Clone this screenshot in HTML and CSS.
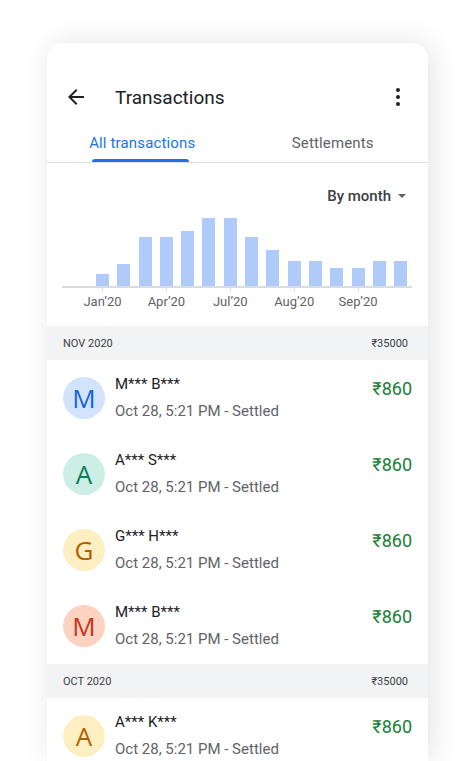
FILE: index.html
```html
<!DOCTYPE html>
<html lang="en">
<head>
<meta charset="utf-8"/>
<meta content="width=device-width, initial-scale=1.0" name="viewport"/>
<title>Transactions</title>
<link rel="stylesheet" href="styles.css">
</head>
<body>
<div class="phone">

  <div class="toolbar">
    <svg class="back" viewBox="0 0 24 24" width="24" height="24"><path d="M20 11H7.83l5.59-5.59L12 4l-8 8 8 8 1.41-1.41L7.83 13H20v-2z" fill="#202124"/></svg>
    <div class="title">Transactions</div>
    <div class="kebab"><span></span><span></span><span></span></div>
  </div>

  <div class="tabs">
    <div class="tab active"><div class="tab-inner"><span class="tab-label">All transactions</span><span class="indicator"></span></div></div>
    <div class="tab"><div class="tab-inner"><span class="tab-label">Settlements</span></div></div>
  </div>

  <div class="filter">
    <span>By month</span>
    <span class="caret"></span>
  </div>

  <div class="chart">
    <div class="bars">
      <div class="bar" style="height:12px"></div>
      <div class="bar" style="height:22px"></div>
      <div class="bar" style="height:49px"></div>
      <div class="bar" style="height:49px"></div>
      <div class="bar" style="height:55px"></div>
      <div class="bar" style="height:68px"></div>
      <div class="bar" style="height:68px"></div>
      <div class="bar" style="height:49px"></div>
      <div class="bar" style="height:36px"></div>
      <div class="bar" style="height:25px"></div>
      <div class="bar" style="height:25px"></div>
      <div class="bar" style="height:18px"></div>
      <div class="bar" style="height:18px"></div>
      <div class="bar" style="height:25px"></div>
      <div class="bar" style="height:25px"></div>
    </div>
    <div class="ticks">
      <div class="tick"></div><div></div><div></div>
      <div class="tick"></div><div></div><div></div>
      <div class="tick"></div><div></div><div></div>
      <div class="tick"></div><div></div><div></div>
      <div class="tick"></div><div></div><div></div>
    </div>
    <div class="labels">
      <div class="lbl"><span>Jan’20</span></div><div></div><div></div>
      <div class="lbl"><span>Apr’20</span></div><div></div><div></div>
      <div class="lbl"><span>Jul’20</span></div><div></div><div></div>
      <div class="lbl"><span>Aug’20</span></div><div></div><div></div>
      <div class="lbl"><span>Sep’20</span></div><div></div><div></div>
    </div>
  </div>

  <div class="month">
    <span>NOV 2020</span>
    <span>₹35000</span>
  </div>

  <div class="txn">
    <div class="avatar blue">M</div>
    <div class="info">
      <div class="name">M*** B***</div>
      <div class="meta">Oct 28, 5:21 PM - Settled</div>
    </div>
    <div class="amount">₹860</div>
  </div>
  <div class="txn">
    <div class="avatar teal">A</div>
    <div class="info">
      <div class="name">A*** S***</div>
      <div class="meta">Oct 28, 5:21 PM - Settled</div>
    </div>
    <div class="amount">₹860</div>
  </div>
  <div class="txn">
    <div class="avatar yellow">G</div>
    <div class="info">
      <div class="name">G*** H***</div>
      <div class="meta">Oct 28, 5:21 PM - Settled</div>
    </div>
    <div class="amount">₹860</div>
  </div>
  <div class="txn">
    <div class="avatar orange">M</div>
    <div class="info">
      <div class="name">M*** B***</div>
      <div class="meta">Oct 28, 5:21 PM - Settled</div>
    </div>
    <div class="amount">₹860</div>
  </div>

  <div class="month">
    <span>OCT 2020</span>
    <span>₹35000</span>
  </div>

  <div class="txn">
    <div class="avatar yellow">A</div>
    <div class="info">
      <div class="name">A*** K***</div>
      <div class="meta">Oct 28, 5:21 PM - Settled</div>
    </div>
    <div class="amount">₹860</div>
  </div>

</div>
</body>
</html>
```

FILE: styles.css
```css
body {
  margin: 0;
  padding-top: 43px;
  background-color: #ffffff;
  font-family: Roboto, 'Noto Sans', 'Liberation Sans', sans-serif;
  color: #202124;
  height: 761px;
  box-sizing: border-box;
  overflow: hidden;
}

.phone {
  width: 381px;
  height: 718px;
  margin-left: 47px;
  padding-top: 26px;
  box-sizing: border-box;
  overflow: hidden;
  background-color: #fff;
  border-radius: 16px 16px 0 0;
  box-shadow: 4px 0 30px rgba(0, 0, 0, 0.11);
}

/* toolbar */
.toolbar {
  display: flex;
  align-items: center;
  height: 56px;
  padding: 0 20px 0 17px;
}

.back {
  display: block;
}

.title {
  flex: 1;
  margin-left: 27px;
  font-size: 19px;
  color: #202124;
}

.kebab {
  display: flex;
  flex-direction: column;
  gap: 3px;
  width: 4px;
  margin-right: 8px;
}

.kebab span {
  width: 4px;
  height: 4px;
  border-radius: 50%;
  background-color: #202124;
}

/* tabs */
.tabs {
  display: flex;
  border-bottom: 1px solid #e0e0e0;
}

.tab {
  flex: 1;
  display: flex;
  justify-content: center;
  height: 37px;
}

.tab-inner {
  display: flex;
  flex-direction: column;
  align-items: stretch;
}

.tab-label {
  margin-top: 8px;
  font-size: 15px;
  letter-spacing: 0.15px;
  line-height: 20px;
  color: #5f6368;
}

.tab.active .tab-label {
  color: #1a73e8;
}

.indicator {
  margin: 6px 6px 0 3px;
  height: 3px;
  border-radius: 3px 3px 0 0;
  background-color: #1a73e8;
}

/* chart */
.filter {
  display: flex;
  justify-content: flex-end;
  align-items: center;
  padding: 24px 22px 0 0;
  line-height: 18px;
  font-size: 15px;
  font-weight: 500;
  color: #3c4043;
}

.caret {
  margin-left: 7px;
  width: 0;
  height: 0;
  border-left: 4px solid transparent;
  border-right: 4px solid transparent;
  border-top: 4px solid #5f6368;
}

.chart {
  margin: 0 16px 16px 15px;
}

.bars,
.ticks,
.labels {
  display: grid;
  grid-template-columns: repeat(15, 13px);
  column-gap: 8.3px;
  padding-left: 34px;
}

.bars {
  height: 81px;
  align-items: end;
  border-bottom: 2px solid #dadce0;
}

.bar {
  background-color: #aecbfa;
}

.ticks {
  height: 4px;
}

.tick {
  width: 1px;
  height: 4px;
  margin-left: 6px;
  background-color: #dadce0;
}

.labels {
  margin-top: 2px;
  height: 16px;
}

.lbl {
  display: flex;
  justify-content: center;
  font-size: 13px;
  line-height: 16px;
  color: #5f6368;
  white-space: nowrap;
}

/* list */
.month {
  display: flex;
  justify-content: space-between;
  align-items: center;
  height: 34px;
  padding: 0 20px 0 16px;
  background-color: #f1f3f4;
  font-size: 11px;
  color: #3c4043;
}

.txn {
  display: flex;
  align-items: center;
  height: 76px;
  padding: 0 16px;
}

.avatar {
  width: 42px;
  height: 42px;
  border-radius: 50%;
  display: flex;
  align-items: center;
  justify-content: center;
  font-size: 26px;
  font-family: 'Open Sans', Roboto, sans-serif;
  flex-shrink: 0;
}

.avatar.blue { background-color: #d2e3fc; color: #1967d2; }
.avatar.teal { background-color: #cdeee4; color: #0b7a5a; }
.avatar.yellow { background-color: #feefc3; color: #b06000; }
.avatar.orange { background-color: #fbd3c0; color: #c5361b; }

.info {
  flex: 1;
  margin-left: 10px;
}

.name {
  font-size: 15px;
  line-height: 20px;
  color: #202124;
}

.meta {
  margin-top: 5px;
  font-size: 15px;
  line-height: 24px;
  color: #5f6368;
}

.amount {
  align-self: flex-start;
  margin-top: 18px;
  font-size: 18px;
  line-height: 22px;
  color: #188038;
}
```
